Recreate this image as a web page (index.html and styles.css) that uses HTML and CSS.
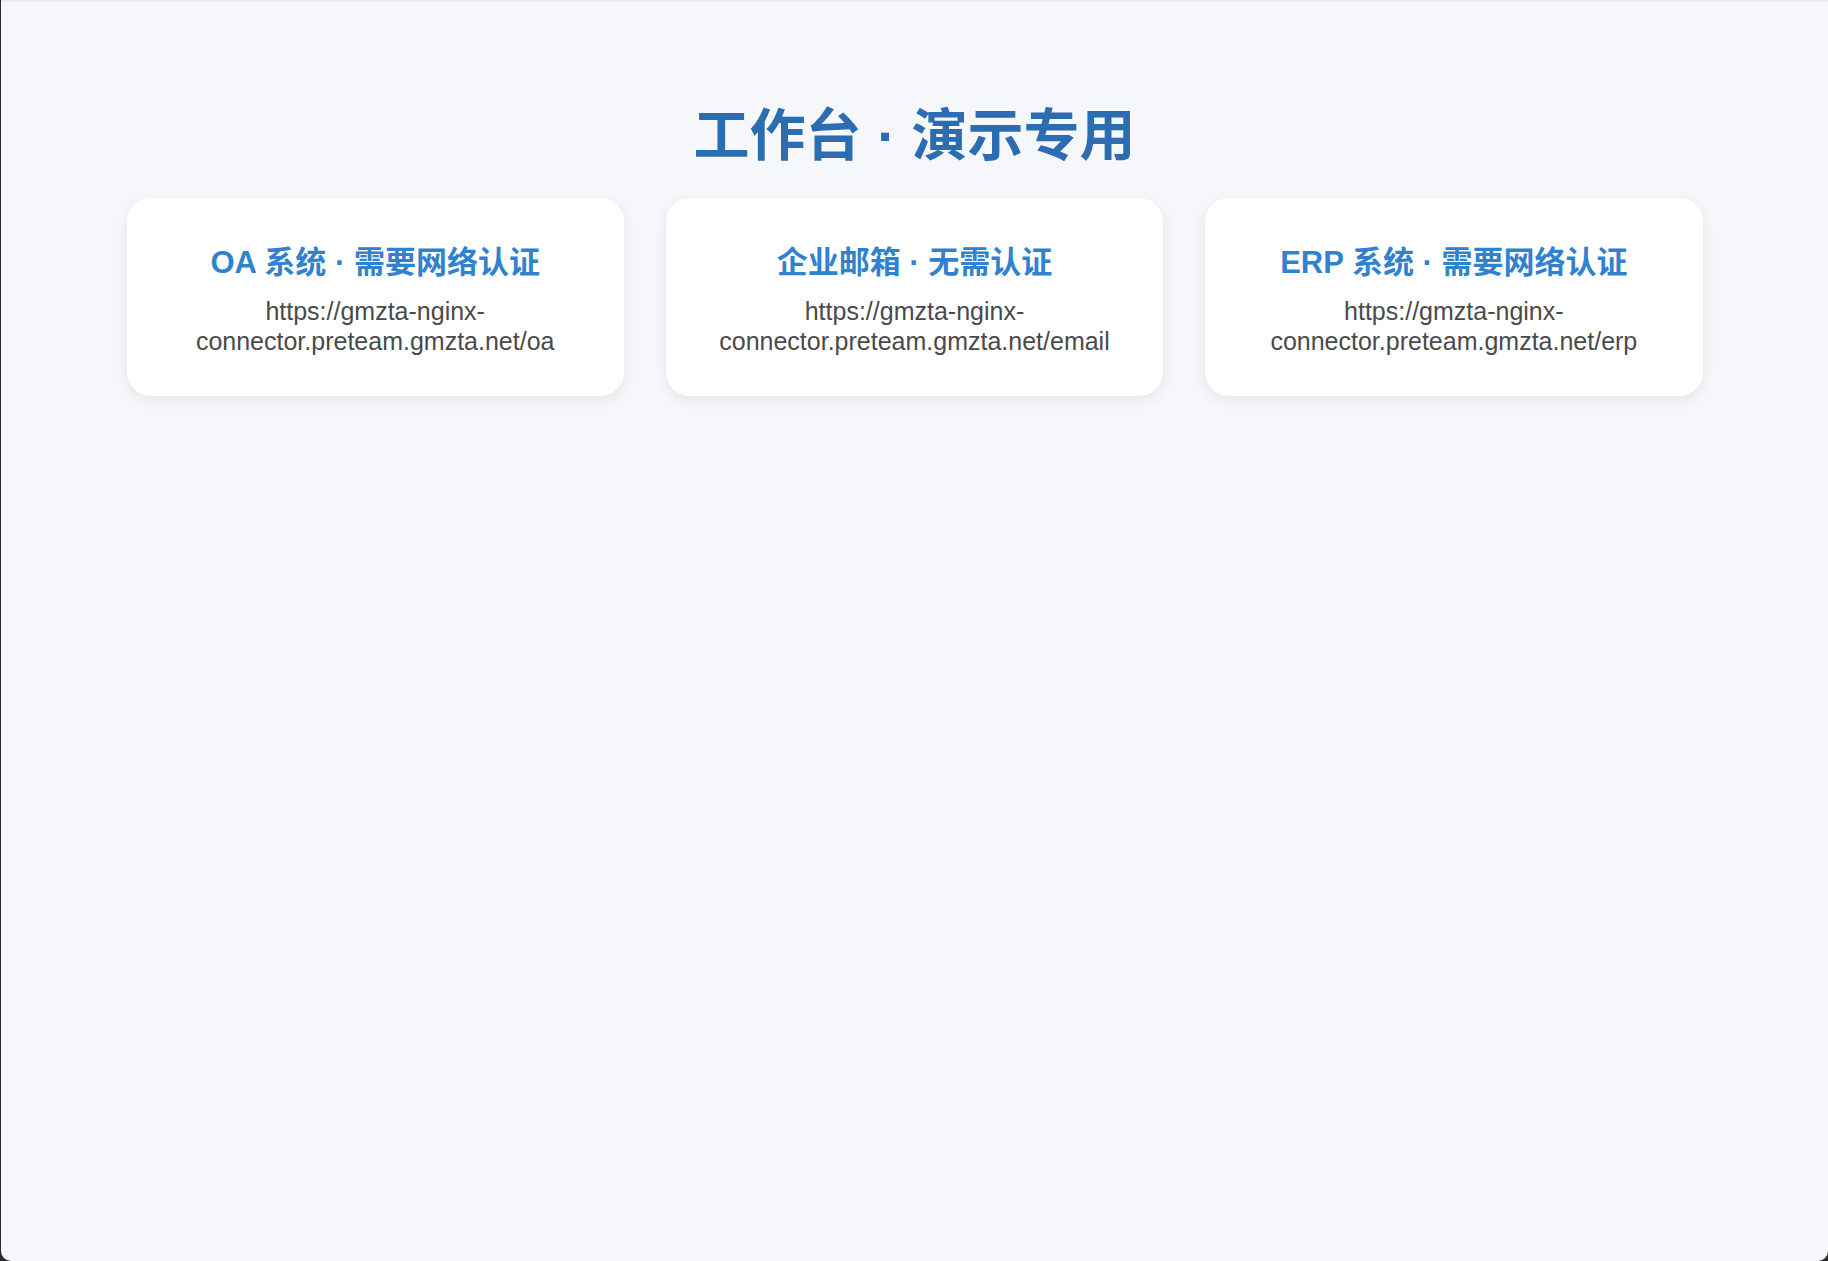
FILE: index.html
```html
<!DOCTYPE html>
<html lang="zh-CN">
<head>
<meta charset="utf-8">
<title>工作台 · 演示专用</title>
<link rel="stylesheet" href="styles.css">
</head>
<body>
<div class="page">
  <h1 class="title">工作台 · 演示专用</h1>
  <div class="grid">
    <a class="card" href="#">
      <h3 class="card-title">OA 系统 · 需要网络认证</h3>
      <p class="card-url">https://gmzta-nginx-connector.preteam.gmzta.net/oa</p>
    </a>
    <a class="card" href="#">
      <h3 class="card-title">企业邮箱 · 无需认证</h3>
      <p class="card-url">https://gmzta-nginx-connector.preteam.gmzta.net/email</p>
    </a>
    <a class="card" href="#">
      <h3 class="card-title">ERP 系统 · 需要网络认证</h3>
      <p class="card-url">https://gmzta-nginx-connector.preteam.gmzta.net/erp</p>
    </a>
  </div>
</div>
</body>
</html>
```

FILE: styles.css
```css
html {
  background: #2a2a2a;
  height: 100%;
}
body {
  margin: 0;
  height: 100%;
  font-family: "Liberation Sans", Arial, "Noto Sans CJK SC", sans-serif;
}
.page {
  box-sizing: border-box;
  height: 100%;
  margin-left: 1px;
  background: #f5f7fa;
  border-top: 2px solid #ececed;
  border-radius: 0 0 10px 10px;
  padding: 100px 0 0;
}
.title {
  margin: 0 0 29px;
  text-align: center;
  font-size: 56px;
  line-height: 67px;
  font-weight: 700;
  color: #2c6db2;
}
.grid {
  display: grid;
  grid-template-columns: repeat(3, 1fr);
  gap: 42px;
  max-width: 1576px;
  margin: 0 auto;
}
.card {
  display: block;
  background: #ffffff;
  border-radius: 24px;
  padding: 45px 40px 40px;
  text-align: center;
  text-decoration: none;
  box-shadow: 0 4px 14px rgba(0, 0, 0, 0.07);
}
.card-title {
  margin: 0 0 14px;
  font-size: 31px;
  line-height: 39px;
  font-weight: 700;
  color: #3182ce;
}
.card-url {
  margin: 0;
  font-size: 25px;
  line-height: 30px;
  color: #4a4a4a;
}
```
